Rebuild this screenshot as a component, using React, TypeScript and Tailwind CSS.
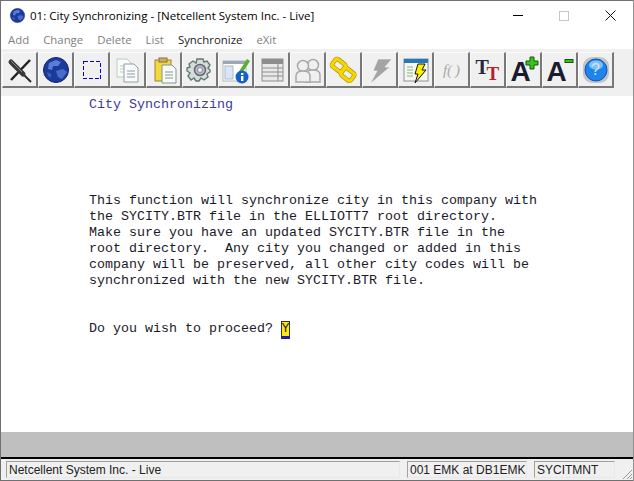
const Btn = ({ children }: { children: React.ReactNode }) => (
  <div className="w-[36px] h-[36px] shrink-0 flex items-center justify-center bg-[#f0f0f0] border-t border-l border-t-[#fafafa] border-l-[#fafafa] border-r-2 border-b-2 border-r-[#787878] border-b-[#787878]">
    {children}
  </div>
);

const Ico = ({ children }: { children: React.ReactNode }) => (
  <svg width="30" height="30" viewBox="0 0 30 30" className="block">{children}</svg>
);

const Globe = ({ size = 30 }: { size?: number }) => (
  <svg width={size} height={size} viewBox="0 0 30 30" className="block">
    <circle cx="15" cy="15" r="12.5" fill="#1c3a9c" />
    <path d="M8 8 L15 5 L20 7 L17 11 L12 11 L11 15 L7 14 Z" fill="#5b7fd8" />
    <path d="M15 16 L22 14 L26 17 L21 24 L17 22 Z" fill="#4a6cc9" />
    <path d="M6 17 L10 19 L10 23 L7 21 Z" fill="#3f5fbd" />
    <circle cx="15" cy="15" r="12.5" fill="none" stroke="#11246e" />
  </svg>
);

const CloseX = () => (
  <Ico>
    <path d="M25 5 L6 25" stroke="#222" strokeWidth="2.5" />
    <path d="M6 7 L26 27" stroke="#2a2a2a" strokeWidth="2" />
    <path d="M6 7 L18 19" stroke="#3a3a3a" strokeWidth="5" strokeLinecap="round" />
    <path d="M6 6 L17 17" stroke="#8a8a8a" strokeWidth="1" />
  </Ico>
);

const Sheet = ({ x, y, c = "#8fb09a" }: { x: number; y: number; c?: string }) => (
  <g>
    <path d={`M${x} ${y} h10 l4 4 v14 h-14 z`} fill="#fafafa" stroke={c} />
    <path d={`M${x + 3} ${y + 7} h8 M${x + 3} ${y + 10} h8 M${x + 3} ${y + 13} h8`} stroke={c} />
  </g>
);

const BigA = ({ children }: { children: React.ReactNode }) => (
  <div className="relative w-[30px] h-[30px]">
    <span className="absolute left-[2px] top-[3px] font-['Liberation_Sans',sans-serif] font-bold text-[28px] leading-[28px] text-[#1a1a30]">A</span>
    <svg width="30" height="30" viewBox="0 0 30 30" className="absolute left-0 top-0">{children}</svg>
  </div>
);

const icons = [
  <CloseX />,
  <Globe />,
  <Ico>
    <rect x="6.5" y="6.5" width="17" height="17" fill="none" stroke="#0000e8" strokeDasharray="4 2" shapeRendering="crispEdges" />
  </Ico>,
  <Ico>
    <Sheet x={4} y={4} c="#b8d0bc" />
    <Sheet x={11} y={9} c="#8aa0a8" />
  </Ico>,
  <Ico>
    <rect x="6" y="5" width="16" height="21" fill="#f2d83a" stroke="#a8803a" />
    <rect x="10" y="3" width="8" height="4" fill="#c8b070" stroke="#8a7040" />
    <Sheet x={13} y={10} c="#7f9a90" />
  </Ico>,
  <Ico>
    <path d="M12 4 h6 l1 3 3-1 3 4-2 3 2 2 v2 l-3 2 1 3-4 3-3-2-2 3 h-3 l-2-3-3 2-3-4 2-3-3-2 v-3 l3-1-1-3 4-3 3 2 z" fill="#d6dcd8" stroke="#5f7a72" strokeWidth="1.4" />
    <circle cx="15" cy="15" r="5.5" fill="#b4bcc8" stroke="#667" strokeWidth="1.5" />
    <circle cx="15" cy="15" r="2.5" fill="#eef0f0" stroke="#889" />
  </Ico>,
  <Ico>
    <rect x="2" y="6" width="23" height="20" fill="#fff" stroke="#b8b8b8" />
    <rect x="2" y="6" width="23" height="3" fill="#9aa8b8" />
    <rect x="4" y="11" width="8" height="13" fill="#dbe6f4" stroke="#aab8c8" />
    <path d="M17 18 L26 4 L29 6 L20 20 Z" fill="#58b030" />
    <circle cx="21" cy="22" r="6.5" fill="#1560c8" />
    <rect x="20" y="21" width="2.4" height="5" fill="#fff" />
    <rect x="20" y="18" width="2.4" height="2" fill="#fff" />
  </Ico>,
  <Ico>
    <rect x="5" y="4" width="21" height="22" fill="#e8e8e8" stroke="#8e8e8e" />
    <rect x="5" y="4" width="21" height="5" fill="#8e8e8e" />
    <path d="M5 13 h21 M5 17 h21 M5 21 h21 M21 9 v17" stroke="#8e8e8e" />
  </Ico>,
  <Ico>
    <circle cx="20" cy="10" r="5.5" fill="#f0f0f0" stroke="#a8a8a8" strokeWidth="1.5" />
    <path d="M13 27 v-7 q0-5 7-5 q7 0 7 5 v7 z" fill="#f0f0f0" stroke="#a8a8a8" strokeWidth="1.5" />
    <circle cx="10" cy="11" r="5.5" fill="#f0f0f0" stroke="#a8a8a8" strokeWidth="1.5" />
    <path d="M3 27 v-6 q0-5 7-5 q7 0 7 5 v6 z" fill="#f0f0f0" stroke="#a8a8a8" strokeWidth="1.5" />
  </Ico>,
  <Ico>
    <g fill="none">
      <rect x="4" y="6" width="12" height="9" rx="2" transform="rotate(38 10 10)" stroke="#b89a00" strokeWidth="4.5" />
      <rect x="13" y="15" width="12" height="9" rx="2" transform="rotate(38 19 19)" stroke="#b89a00" strokeWidth="4.5" />
      <rect x="4" y="6" width="12" height="9" rx="2" transform="rotate(38 10 10)" stroke="#f5d800" strokeWidth="3" />
      <rect x="13" y="15" width="12" height="9" rx="2" transform="rotate(38 19 19)" stroke="#f5d800" strokeWidth="3" />
    </g>
  </Ico>,
  <Ico>
    <path d="M13 4 H27 L20 12 H25 L5 29 L12 16 H8 Z" fill="#a4a4a4" stroke="#fafafa" strokeWidth="0.6" />
  </Ico>,
  <Ico>
    <rect x="3" y="4" width="24" height="22" fill="#f4f8f0" stroke="#8a9098" />
    <rect x="3" y="4" width="24" height="4" fill="#2878b8" />
    <path d="M6 12 h6 M6 15 h6 M6 18 h6 M6 21 h6" stroke="#a8cca0" strokeWidth="1.5" />
    <path d="M17 9 H24 L21 15 H25 L14 28 L17 19 H14 Z" fill="#ffee00" stroke="#111" />
  </Ico>,
  <div className="w-[30px] h-[30px] flex items-center justify-center gap-[3px] font-['Liberation_Serif',serif] italic text-[15px] leading-[18px] text-[#a8a8a8]">
    <span>f(</span>
    <span>)</span>
  </div>,
  <div className="relative w-[30px] h-[30px] font-['Liberation_Serif',serif] font-bold leading-[18px]">
    <span className="absolute left-[3px] top-[3px] text-[20px] text-[#26263e]">T</span>
    <span className="absolute left-[14px] top-[10px] text-[19px] text-[#b8202c]">T</span>
  </div>,
  <BigA>
    <path d="M21 2 h4 v4 h4 v4 h-4 v4 h-4 v-4 h-4 v-4 h4 z" fill="#38c020" stroke="#145a08" />
  </BigA>,
  <BigA>
    <rect x="20" y="4.5" width="8" height="3" fill="#38c020" stroke="#145a08" />
  </BigA>,
  <div className="relative w-[30px] h-[30px]">
    <svg width="30" height="30" viewBox="0 0 30 30" className="absolute left-0 top-0">
      <rect x="2" y="2" width="26" height="26" rx="9" fill="#c4c4c4" />
      <circle cx="15" cy="15" r="11" fill="#1f84ea" stroke="#0c54b8" />
      <ellipse cx="15" cy="10" rx="7" ry="4.5" fill="#7cc0f8" />
    </svg>
    <span className="absolute inset-0 flex items-center justify-center font-['Liberation_Sans',sans-serif] text-[16px] leading-[18px] text-[#cfe6fb]">?</span>
  </div>,
];

const lines = [
  "This function will synchronize city in this company with",
  "the SYCITY.BTR file in the ELLIOTT7 root directory.",
  "Make sure you have an updated SYCITY.BTR file in the",
  "root directory.  Any city you changed or added in this",
  "company will be preserved, all other city codes will be",
  "synchronized with the new SYCITY.BTR file.",
];

const menu = [
  { label: "Add", active: false },
  { label: "Change", active: false },
  { label: "Delete", active: false },
  { label: "List", active: false },
  { label: "Synchronize", active: true },
  { label: "eXit", active: false },
];

export default function App() {
  return (
    <div className="w-[634px] h-[481px] flex flex-col bg-white overflow-hidden font-['Liberation_Sans',sans-serif] border-l border-r border-l-[#707070] border-r-[#909090]">
      {/* title bar */}
      <div className="h-[30px] shrink-0 flex items-center border-t border-[#707070] font-['Open_Sans',sans-serif]">
        <div className="ml-[8px] mr-[4px]"><Globe size={17} /></div>
        <span className="text-[11.55px] text-black whitespace-nowrap">01: City Synchronizing - [Netcellent System Inc. - Live]</span>
        <div className="ml-auto flex items-center">
          <div className="w-[46px] flex justify-center"><div className="w-[10px] h-px bg-black" /></div>
          <div className="w-[46px] flex justify-center"><div className="w-[10px] h-[10px] border border-[#c8c8c8]" /></div>
          <div className="w-[46px] flex justify-center">
            <svg width="11" height="11" viewBox="0 0 11 11"><path d="M0.5 0.5 L10.5 10.5 M10.5 0.5 L0.5 10.5" stroke="#111" /></svg>
          </div>
        </div>
      </div>

      {/* menu */}
      <div className="h-[19px] shrink-0 flex items-center pl-[7px] gap-[14px] text-[11.4px] font-['Open_Sans',sans-serif]">
        {menu.map((m) => (
          <span key={m.label} className={m.active ? "text-[#222]" : "text-[#808080]"}>{m.label}</span>
        ))}
      </div>

      {/* toolbar */}
      <div className="h-[47px] shrink-0 bg-[#f0f0f0] pt-[3px] pl-[1px] flex items-start">
        {icons.map((ic, i) => (
          <Btn key={i}>{ic}</Btn>
        ))}
      </div>

      {/* screen */}
      <div className="flex-1 bg-white pl-[88px] pt-[1px] font-['Liberation_Mono',monospace] text-[13.33px] leading-[16px] text-[#1a1a2a] whitespace-pre">
        <div className="text-[#3a3a9c]">City Synchronizing</div>
        <div className="mt-[80px]">
          {lines.map((l) => (
            <div key={l}>{l}</div>
          ))}
        </div>
        <div className="mt-[32px] flex">
          <span>Do you wish to proceed? </span>
          <span className="w-[9px] h-[18px] bg-[#ffe81a] border border-[#333] text-[#1a1a2a] flex justify-center leading-[14px] border-b-[3px] border-b-[#1c1cb0]">Y</span>
        </div>
      </div>

      {/* gray band */}
      <div className="h-[25px] shrink-0 bg-[#bfbfbf]" />

      {/* status bar */}
      <div className="h-[24px] shrink-0 bg-[#f0f0f0] border-t-2 border-t-black border-b border-b-[#707070] flex items-center pl-[5px] text-[12px] text-[#222] relative">
        <div className="w-[394px] h-[17px] border border-[#a0a0a0] border-r-[#e8e8e8] border-b-[#e8e8e8] flex items-center pl-[2px] whitespace-nowrap">Netcellent System Inc. - Live</div>
        <div className="w-[120px] h-[17px] ml-[7px] border border-[#a0a0a0] border-r-[#e8e8e8] border-b-[#e8e8e8] flex items-center pl-[2px] whitespace-nowrap">001 EMK at DB1EMK</div>
        <div className="w-[81px] h-[17px] ml-[7px] border border-[#a0a0a0] border-r-[#e8e8e8] border-b-[#e8e8e8] flex items-center pl-[2px] whitespace-nowrap">SYCITMNT</div>
        <svg width="12" height="12" viewBox="0 0 12 12" className="absolute right-0 bottom-0">
          <path d="M11 2 L2 11 M11 6 L6 11 M11 9 L9 11" stroke="#999" />
        </svg>
      </div>
    </div>
  );
}
